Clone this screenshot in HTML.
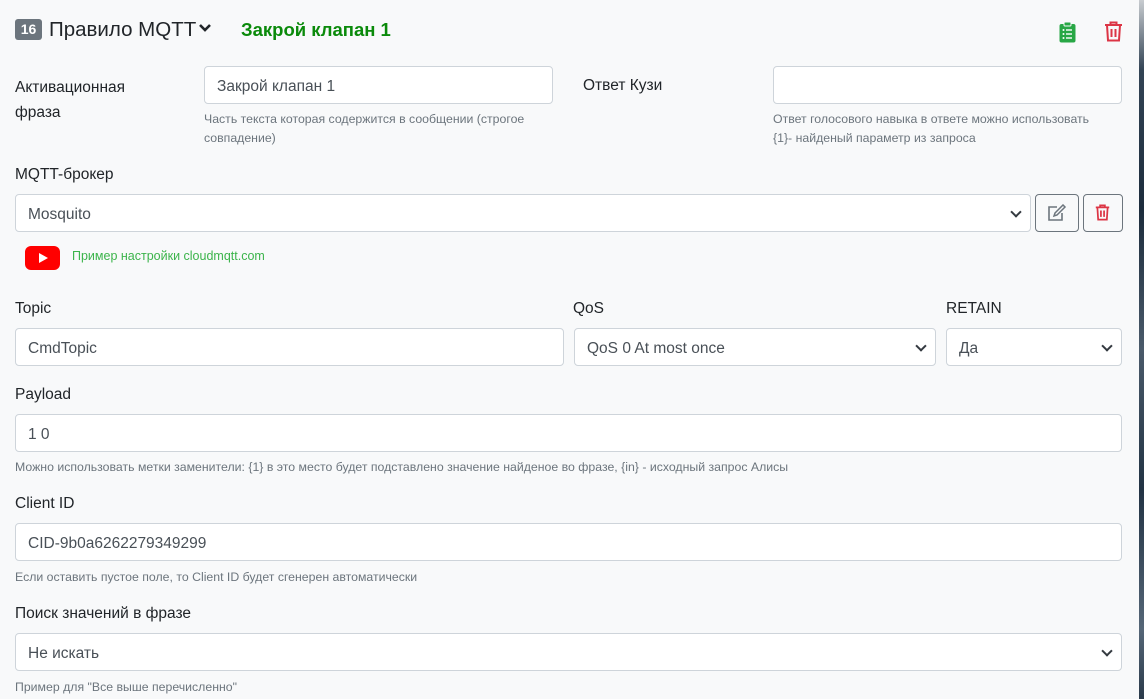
<!DOCTYPE html>
<html><head><meta charset="utf-8"><style>
*{box-sizing:border-box;margin:0;padding:0}
body{width:1144px;height:699px;overflow:hidden;background:#f8f9fa;font-family:"Liberation Sans","DejaVu Sans",sans-serif;color:#212529;position:relative}
.a{position:absolute;white-space:nowrap}
.lbl{font-size:15.5px;color:#212529}
.in{position:absolute;height:38px;background:#fff;border:1px solid #ced4da;border-radius:4px;font-size:15.5px;color:#495057;padding:0 12px;line-height:40px}
.sel::after{content:"";position:absolute;right:10px;top:13px;width:6px;height:6px;border-right:2px solid #343a40;border-bottom:2px solid #343a40;transform:rotate(45deg)}
.help{font-size:12.3px;color:#6c757d;line-height:19px}
.strip{position:absolute;left:1139px;top:0;width:5px;height:699px;background:linear-gradient(#c8ccd0,#334455 10%,#1c2c3c 30%,#4a5a6a 50%,#223344 70%,#556677 90%,#2a3a4a)}
</style></head><body>
<div class="strip"></div>
<div class="a" style="left:15px;top:19px;width:27px;height:21px;background:#6c757d;border-radius:3px;color:#fff;font-weight:bold;font-size:14px;text-align:center;line-height:21px">16</div>
<div class="a" style="left:49px;top:17px;font-size:20.5px;line-height:26px">Правило MQTT</div>
<svg class="a" style="left:198px;top:23px" width="14" height="10" viewBox="0 0 14 10"><path d="M2 2l5 5 5-5" stroke="#212529" stroke-width="2.6" fill="none"/></svg>
<div class="a" style="left:241px;top:18px;font-size:18.5px;line-height:24px;color:#0a8a0a;font-weight:bold">Закрой клапан 1</div>
<svg class="a" style="left:1059px;top:21px" width="17" height="22" viewBox="0 0 17 22"><rect x="0.5" y="3" width="16" height="18.5" rx="2" fill="#28a745"/><rect x="5" y="1" width="7" height="4" rx="1" fill="#28a745" stroke="#f8f9fa" stroke-width="1"/><g fill="#fff"><circle cx="4.5" cy="9" r="1"/><circle cx="4.5" cy="13" r="1"/><circle cx="4.5" cy="17" r="1"/><rect x="7" y="8.3" width="6" height="1.4"/><rect x="7" y="12.3" width="6" height="1.4"/><rect x="7" y="16.3" width="6" height="1.4"/></g></svg>
<svg class="a" style="left:1104px;top:21px" width="19" height="21" viewBox="0 0 19 21"><g stroke="#dc3545" stroke-width="2" fill="none"><path d="M1 4h17M6.5 4V1.5h6V4M3 4l1 15.5h11L16 4M7.5 8v8M11.5 8v8"/></g></svg>

<div class="a lbl" style="left:15px;top:75px;line-height:25px">Активационная<br>фраза</div>
<div class="in" style="left:204px;top:66px;width:349px">Закрой клапан 1</div>
<div class="a help" style="left:204px;top:110px">Часть текста которая содержится в сообщении (строгое<br>совпадение)</div>
<div class="a lbl" style="left:583px;top:77px">Ответ Кузи</div>
<div class="in" style="left:773px;top:66px;width:349px"></div>
<div class="a help" style="left:773px;top:110px">Ответ голосового навыка в ответе можно использовать<br>{1}- найденый параметр из запроса</div>

<div class="a lbl" style="left:15px;top:166px">MQTT-брокер</div>
<div class="in sel" style="left:15px;top:194px;width:1016px">Mosquito</div>
<div class="a" style="left:1035px;top:194px;width:44px;height:38px;border:1px solid #6c757d;border-radius:4px"></div>
<svg class="a" style="left:1047px;top:204px" width="20" height="18" viewBox="0 0 20 18"><path d="M10 3H2v13h13V9" stroke="#6c757d" stroke-width="1.6" fill="none"/><path d="M7 12l1-3 8-8 2 2-8 8z" stroke="#6c757d" stroke-width="1.5" fill="none"/></svg>
<div class="a" style="left:1083px;top:194px;width:40px;height:38px;border:1px solid #6c757d;border-radius:4px"></div>
<svg class="a" style="left:1095px;top:204px" width="15" height="17" viewBox="0 0 19 21"><g stroke="#dc3545" stroke-width="2.2" fill="none"><path d="M1 4h17M6.5 4V1.5h6V4M3 4l1 15.5h11L16 4M7.5 8v8M11.5 8v8"/></g></svg>
<svg class="a" style="left:25px;top:246px" width="35" height="24" viewBox="0 0 35 24"><rect width="35" height="24" rx="6" fill="#ff0000"/><path d="M14 7l9 5-9 5z" fill="#fff"/></svg>
<div class="a" style="left:72px;top:249px;font-size:12.5px;color:#3cb44b">Пример настройки cloudmqtt.com</div>

<div class="a lbl" style="left:15px;top:300px">Topic</div>
<div class="in" style="left:15px;top:328px;width:549px">CmdTopic</div>
<div class="a lbl" style="left:573px;top:300px">QoS</div>
<div class="in sel" style="left:574px;top:328px;width:362px">QoS 0 At most once</div>
<div class="a lbl" style="left:946px;top:300px">RETAIN</div>
<div class="in sel" style="left:946px;top:328px;width:176px">Да</div>

<div class="a lbl" style="left:15px;top:386px">Payload</div>
<div class="in" style="left:15px;top:414px;width:1107px">1 0</div>
<div class="a help" style="left:15px;top:458px">Можно использовать метки заменители: {1} в это место будет подставлено значение найденое во фразе, {in} - исходный запрос Алисы</div>

<div class="a lbl" style="left:15px;top:495px">Client ID</div>
<div class="in" style="left:15px;top:523px;width:1107px">CID-9b0a6262279349299</div>
<div class="a help" style="left:15px;top:568px">Если оставить пустое поле, то Client ID будет сгенерен автоматически</div>

<div class="a lbl" style="left:15px;top:605px">Поиск значений в фразе</div>
<div class="in sel" style="left:15px;top:633px;width:1107px">Не искать</div>
<div class="a help" style="left:15px;top:678px">Пример для "Все выше перечисленно"</div>
</body></html>
